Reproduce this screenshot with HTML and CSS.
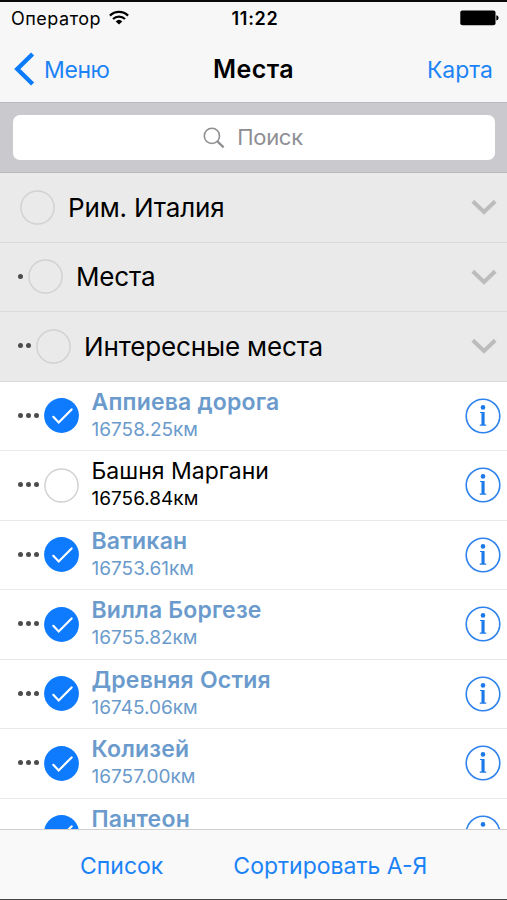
FILE: index.html
```html
<!DOCTYPE html>
<html lang="ru">
<head>
    <meta charset="UTF-8">
    <title>Места</title>
    <link rel="stylesheet" href="styles.css">
</head>
<body>
<svg width="0" height="0" class="defs">
    <symbol id="check" viewBox="0 0 35 35">
        <circle cx="17.5" cy="17.5" r="17.4" fill="#0e7afe"/>
        <path d="M9.3 18.8 L14.7 24.4 L27.6 11.4" fill="none" stroke="#fff" stroke-width="2.2" stroke-linecap="round"/>
    </symbol>
    <symbol id="empty" viewBox="0 0 35 35">
        <circle cx="17.5" cy="17.5" r="16.6" fill="none" stroke="#d2d2d2" stroke-width="1.5"/>
    </symbol>
    <symbol id="down" viewBox="0 0 26 18">
        <path d="M1.8 3.2 L13 14 L24.2 3.2" fill="none" stroke="#bcbcbc" stroke-width="4"/>
    </symbol>
    <symbol id="info" viewBox="0 0 36 36">
        <circle cx="18" cy="18" r="16.8" fill="none" stroke="#2e83ec" stroke-width="1.6"/>
        <circle cx="18" cy="9.4" r="2.3" fill="#1b79ea"/>
        <path d="M15 14 H19.6 V26.6 H21.2 V27.7 H14.8 V26.6 H16.5 V15.1 H15 Z" fill="#1b79ea"/>
    </symbol>
</svg>

<div class="screen">
    <!-- Статус и навигация -->
    <header class="top">
        <div class="status">
            <div class="carrier">
                <span>Оператор</span>
                <svg class="wifi" width="20" height="15" viewBox="0 0 20 15">
                    <g fill="none" stroke="#000" stroke-width="2.2">
                        <path d="M0.9 5.6 A13 13 0 0 1 19.1 5.6"/>
                        <path d="M4 9 A8.6 8.6 0 0 1 16 9"/>
                    </g>
                    <path d="M6.7 11.4 A4.8 4.8 0 0 1 13.3 11.4 L10 14.6 Z"/>
                </svg>
            </div>
            <span class="time">11:22</span>
            <svg class="battery" width="39" height="16" viewBox="0 0 39 16">
                <rect x="0.3" y="0.6" width="35.2" height="14.6" rx="2"/>
                <path d="M36.3 5.2 Q38.6 5.6 38.6 7.9 Q38.6 10.2 36.3 10.6 Z"/>
            </svg>
        </div>
        <nav class="navbar">
            <a class="back">
                <svg width="21" height="34" viewBox="0 0 21 34">
                    <path d="M18.6 2 L3.3 17 L18.6 32" fill="none" stroke="#0b7bfb" stroke-width="4.4"/>
                </svg>
                <span>Меню</span>
            </a>
            <h1>Места</h1>
            <a class="map">Карта</a>
        </nav>
    </header>

    <div class="search">
        <div class="field">
            <svg width="22" height="22" viewBox="0 0 22 22">
                <g fill="none" stroke="#8e8e93">
                    <circle cx="8.9" cy="8.9" r="7.6" stroke-width="1.6"/>
                    <path d="M14.4 14.4 L20.6 20.4" stroke-width="2.2"/>
                </g>
            </svg>
            <span>Поиск</span>
        </div>
    </div>

    <!-- Список мест -->
    <main class="list">
        <div class="row group">
            <svg class="mark"><use href="#empty"/></svg>
            <span class="name">Рим. Италия</span>
            <svg class="down"><use href="#down"/></svg>
        </div>
        <div class="row group">
            <span class="dots"><i></i></span>
            <svg class="mark"><use href="#empty"/></svg>
            <span class="name">Места</span>
            <svg class="down"><use href="#down"/></svg>
        </div>
        <div class="row group">
            <span class="dots"><i></i><i></i></span>
            <svg class="mark"><use href="#empty"/></svg>
            <span class="name">Интересные места</span>
            <svg class="down"><use href="#down"/></svg>
        </div>
        <div class="row selected">
            <span class="dots"><i></i><i></i><i></i></span>
            <svg class="mark"><use href="#check"/></svg>
            <div class="place"><span class="name">Аппиева дорога</span><span class="km">16758.25км</span></div>
            <svg class="info"><use href="#info"/></svg>
        </div>
        <div class="row">
            <span class="dots"><i></i><i></i><i></i></span>
            <svg class="mark"><use href="#empty"/></svg>
            <div class="place"><span class="name">Башня Маргани</span><span class="km">16756.84км</span></div>
            <svg class="info"><use href="#info"/></svg>
        </div>
        <div class="row selected">
            <span class="dots"><i></i><i></i><i></i></span>
            <svg class="mark"><use href="#check"/></svg>
            <div class="place"><span class="name">Ватикан</span><span class="km">16753.61км</span></div>
            <svg class="info"><use href="#info"/></svg>
        </div>
        <div class="row selected">
            <span class="dots"><i></i><i></i><i></i></span>
            <svg class="mark"><use href="#check"/></svg>
            <div class="place"><span class="name">Вилла Боргезе</span><span class="km">16755.82км</span></div>
            <svg class="info"><use href="#info"/></svg>
        </div>
        <div class="row selected">
            <span class="dots"><i></i><i></i><i></i></span>
            <svg class="mark"><use href="#check"/></svg>
            <div class="place"><span class="name">Древняя Остия</span><span class="km">16745.06км</span></div>
            <svg class="info"><use href="#info"/></svg>
        </div>
        <div class="row selected">
            <span class="dots"><i></i><i></i><i></i></span>
            <svg class="mark"><use href="#check"/></svg>
            <div class="place"><span class="name">Колизей</span><span class="km">16757.00км</span></div>
            <svg class="info"><use href="#info"/></svg>
        </div>
        <div class="row selected">
            <span class="dots"><i></i><i></i><i></i></span>
            <svg class="mark"><use href="#check"/></svg>
            <div class="place"><span class="name">Пантеон</span></div>
            <svg class="info"><use href="#info"/></svg>
        </div>
    </main>

    <footer class="toolbar">
        <a class="show-list">Список</a>
        <a class="sort">Сортировать А-Я</a>
    </footer>
</div>
</body>
</html>
```
FILE: styles.css
```css
* { box-sizing: border-box; }
body { margin: 0; font-family: Inter, "Noto Sans", sans-serif; color: #000; }
svg { display: block; flex: none; }
.defs { position: absolute; }
.screen { width: 507px; height: 900px; display: flex; flex-direction: column; overflow: hidden; border-top: 2px solid #0a0a0c; border-bottom: 1px solid #444; white-space: nowrap; }

/* шапка */
.top { flex: none; height: 101px; background: #f7f7f8; border-bottom: 1px solid #b9b9bd; }
.status { height: 32px; display: grid; grid-template-columns: 1fr auto 1fr; align-items: center; padding: 0 8px 0 11px; font-size: 18px; }
.carrier { display: flex; align-items: center; gap: 8px; letter-spacing: 0.5px; }
.wifi { margin-top: -2px; }
.time { font-weight: 600; letter-spacing: 0.7px; }
.battery { justify-self: end; }
.navbar { height: 68px; display: grid; grid-template-columns: 1fr auto 1fr; align-items: center; padding: 2px 14px 0 14px; font-size: 23px; }
.navbar a { color: #1c83f7; }
.back { display: flex; align-items: center; gap: 9px; letter-spacing: -0.4px; }
.back span, .map { padding-top: 2px; }
.navbar h1 { margin: 0; padding-bottom: 1px; font-size: 25px; font-weight: 600; letter-spacing: 0.4px; }
.map { justify-self: end; }

/* поиск */
.search { flex: none; height: 70px; padding: 12px 12px 0 13px; background: #c9c9ce; border-bottom: 1px solid #b9b9bb; }
.field { height: 45px; display: flex; align-items: center; justify-content: center; gap: 12px; padding-right: 2px; background: #fff; border-radius: 7px; color: #8e8e93; font-size: 22px; letter-spacing: -0.3px; }
.field span { padding-bottom: 2px; }

/* список */
.list { flex: 1; min-height: 0; overflow: hidden; background: #fff; }
.row { height: 69.5px; display: flex; align-items: center; padding: 0 6px 0 20px; border-bottom: 1px solid #e9e9eb; }
.group { background: #eaeaea; border-bottom-color: #dadadc; padding-right: 10px; }
.dots { display: flex; gap: 3px; margin: -1px 2px 0 -2px; padding-right: 3px; }
.dots i { width: 5px; height: 5px; border-radius: 50%; background: #4c4c4c; }
.mark { width: 35px; height: 35px; }
.down { width: 26px; height: 18px; margin-left: auto; }
.info { width: 36px; height: 36px; margin-left: auto; }
.group .name { margin-left: 13px; font-size: 26px; letter-spacing: -0.15px; }
.place { align-self: flex-start; display: flex; flex-direction: column; margin-left: 12.5px; padding-top: 5px; }
.place .name { font-size: 23px; line-height: 31px; }
.place .km { font-size: 19px; line-height: 24px; }
.selected .place { color: #6b9bcc; }
.selected .name { font-weight: 600; letter-spacing: 0.2px; }

/* нижняя панель */
.toolbar { flex: none; height: 70px; display: flex; align-items: center; gap: 70px; padding: 2px 0 0 80px; background: #f9f9f9; border-top: 1px solid #cfcfd1; color: #1c83f7; font-size: 23px; }
```
